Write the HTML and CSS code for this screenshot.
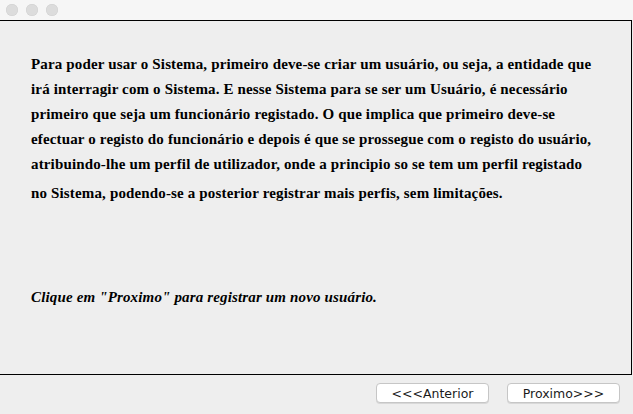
FILE: index.html
```html
<!DOCTYPE html>
<html>
<head>
<meta charset="utf-8">
<link rel="stylesheet" href="styles.css">
</head>
<body>
<div class="window">
  <div class="titlebar">
    <span class="dot"></span><span class="dot"></span><span class="dot"></span>
  </div>
  <div class="panel">
    <div class="content">
      <p class="intro">Para poder usar o Sistema, primeiro deve-se criar um usuário, ou seja, a entidade que<br>irá interragir com o Sistema. E nesse Sistema para se ser um Usuário, é necessário<br>primeiro que seja um funcionário registado. O que implica que primeiro deve-se<br>efectuar o registo do funcionário e depois é que se prossegue com o registo do usuário,<br>atribuindo-lhe um perfil de utilizador, onde a principio so se tem um perfil registado</p>
      <p class="intro last">no Sistema, podendo-se a posterior registrar mais perfis, sem limitações.</p>
      <p class="hint">Clique em "Proximo" para registrar um novo usuário.</p>
    </div>
  </div>
  <div class="footer">
    <button class="btn">&lt;&lt;&lt;Anterior</button>
    <button class="btn">Proximo&gt;&gt;&gt;</button>
  </div>
</div>
</body>
</html>
```
FILE: styles.css
```css
html, body {
  margin: 0;
  padding: 0;
  background: #eeeeee;
}
.window {
  width: 633px;
  height: 414px;
  display: flex;
  flex-direction: column;
  background: #eeeeee;
  overflow: hidden;
}
.titlebar {
  height: 20px;
  background: #f6f6f6;
  display: flex;
  align-items: center;
  gap: 8px;
  padding-left: 6px;
  box-sizing: border-box;
}
.dot {
  width: 12px;
  height: 12px;
  border-radius: 50%;
  background: #dcdcdc;
  box-shadow: inset 0 0 0 0.5px #d0d0d0;
}
.panel {
  height: 355px;
  width: 632px;
  box-sizing: border-box;
  border-top: 1px solid #000;
  border-right: 1px solid #000;
  border-bottom: 1px solid #000;
  background: #eeeeee;
}
.content {
  padding: 31px 0 0 31px;
  font-family: "Liberation Serif", "Times New Roman", serif;
  font-size: 15px;
  letter-spacing: 0.15px;
  color: #000;
}
.intro {
  margin: 0;
  font-weight: bold;
  line-height: 25px;
  white-space: nowrap;
}
.intro.last {
  margin-top: 4px;
}
.hint {
  margin: 79px 0 0 0;
  font-weight: bold;
  font-style: italic;
  line-height: 25px;
}
.footer {
  flex: 1;
  display: flex;
  justify-content: flex-end;
  align-items: flex-start;
  gap: 18px;
  padding: 8px 13px 0 0;
}
.btn {
  width: 113px;
  height: 20px;
  padding: 0;
  border: 1px solid #c6c6c6;
  border-radius: 4px;
  background: #ffffff;
  box-shadow: 0 1px 0 #d8d8d8;
  font-family: "DejaVu Sans", "Liberation Sans", sans-serif;
  font-size: 12.5px;
  color: #1a1a1a;
}
```
